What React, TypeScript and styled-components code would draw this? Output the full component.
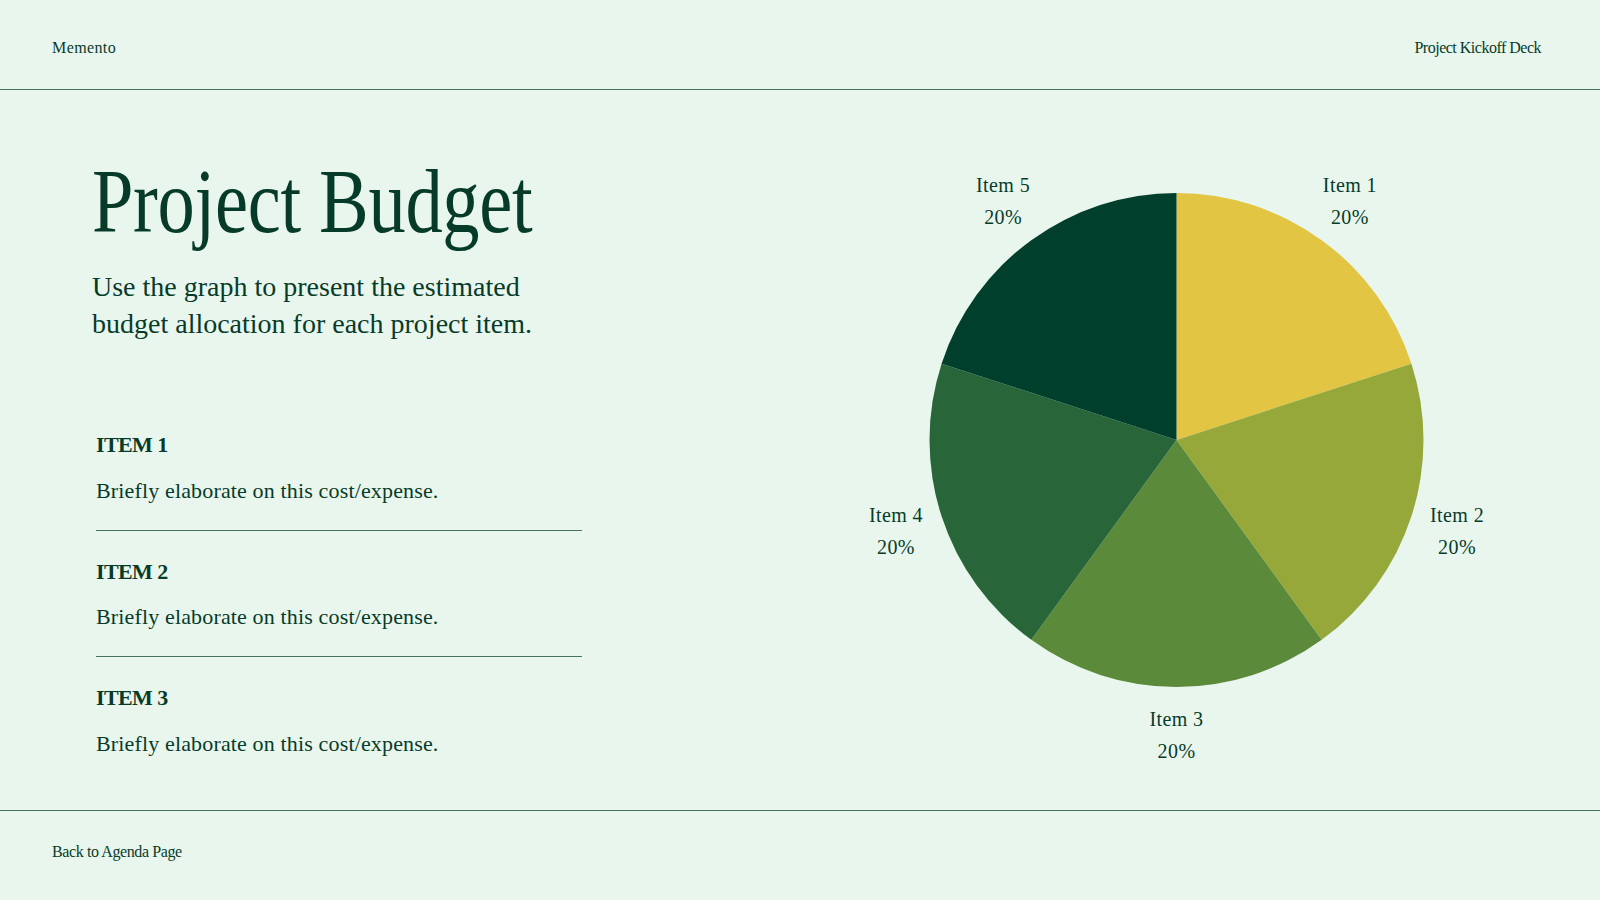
import styled, { createGlobalStyle } from 'styled-components';

const INK = '#073b29';
const RULE = '#46735f';

const GlobalStyle = createGlobalStyle`
	html, body {
		margin: 0;
		padding: 0;
		background: #e9f6ed;
	}
	body {
		font-family: "Liberation Serif", "Times New Roman", serif;
		color: ${INK};
	}
`;

type Slice = {
	label: string;
	value: number;
	color: string;
};

const slices: Slice[] = [
	{ label: 'Item 1', value: 20, color: '#e2c542' },
	{ label: 'Item 2', value: 20, color: '#97a83a' },
	{ label: 'Item 3', value: 20, color: '#5a8a3a' },
	{ label: 'Item 4', value: 20, color: '#286639' },
	{ label: 'Item 5', value: 20, color: '#013f2d' },
];

const items = ['ITEM 1', 'ITEM 2', 'ITEM 3'];

const Slide = styled.div`
	width: 1600px;
	height: 900px;
	display: flex;
	flex-direction: column;
	overflow: hidden;
`;

const Bar = styled.div<{ $top?: boolean }>`
	box-sizing: border-box;
	flex: none;
	display: flex;
	align-items: center;
	justify-content: space-between;
	padding: ${(p) => (p.$top ? '7px 59px 0 52px' : '0 59px 8px 52px')};
	height: 90px;
	${(p) => (p.$top ? `border-bottom: 1px solid ${RULE};` : `border-top: 1px solid ${RULE};`)}
	font-size: 16px;
`;

const BarText = styled.span<{ $spacing: number }>`
	letter-spacing: ${(p) => p.$spacing}px;
`;

const Main = styled.main`
	flex: 1;
	min-height: 0;
	display: flex;
`;

const TextColumn = styled.section`
	flex: 1;
	padding: 65px 0 0 92px;
`;

const Title = styled.h1`
	margin: 0;
	font-size: 92px;
	line-height: 92px;
	font-weight: 400;
	letter-spacing: -0.4px;
	transform: scaleX(0.81);
	transform-origin: left center;
	white-space: nowrap;
`;

const Lead = styled.p`
	margin: 22px 0 0;
	font-size: 28px;
	line-height: 36.5px;
`;

const ItemList = styled.ul`
	list-style: none;
	margin: 62px 0 0 4px;
	padding: 0;
	width: 486px;
`;

const Item = styled.li`
	padding: 28px 0 26px;
	border-bottom: 1px solid ${RULE};

	&:last-child {
		border-bottom: none;
	}
`;

const ItemName = styled.div`
	font-size: 22px;
	line-height: 26px;
	font-weight: 700;
	letter-spacing: -0.6px;
`;

const ItemText = styled.div`
	margin-top: 19.5px;
	font-size: 22px;
	line-height: 26px;
	letter-spacing: 0.15px;
`;

const ChartArea = styled.div`
	width: 720px;
	margin-right: 60px;
`;

const ChartSvg = styled.svg`
	display: block;
`;

const ChartLabel = styled.text`
	font-family: "Liberation Serif", "Times New Roman", serif;
	font-size: 20px;
	letter-spacing: 0.4px;
	fill: ${INK};
`;

function PieChart({ data }: { data: Slice[] }) {
	const cx = 356.5;
	const cy = 350;
	const r = 247;
	const labelR = 295;
	const total = data.reduce((sum, d) => sum + d.value, 0);

	let angle = 0;
	const point = (deg: number, radius: number) => {
		const rad = (deg * Math.PI) / 180;
		return [cx + radius * Math.sin(rad), cy - radius * Math.cos(rad)];
	};

	return (
		<ChartSvg width="720" height="720" viewBox="0 0 720 720">
			{data.map((d) => {
				const sweep = (d.value / total) * 360;
				const start = angle;
				const end = angle + sweep;
				angle = end;
				const [x1, y1] = point(start, r);
				const [x2, y2] = point(end, r);
				const [lx, ly] = point(start + sweep / 2, labelR);
				const large = sweep > 180 ? 1 : 0;
				return (
					<g key={d.label}>
						<path
							d={`M ${cx} ${cy} L ${x1} ${y1} A ${r} ${r} 0 ${large} 1 ${x2} ${y2} Z`}
							fill={d.color}
						/>
						<ChartLabel x={lx} y={ly - 9} textAnchor="middle">
							{d.label}
						</ChartLabel>
						<ChartLabel x={lx} y={ly + 22.5} textAnchor="middle">
							{d.value}%
						</ChartLabel>
					</g>
				);
			})}
		</ChartSvg>
	);
}

export default function App() {
	return (
		<>
			<GlobalStyle />
			<Slide>
				<Bar $top>
					<BarText $spacing={0.4}>Memento</BarText>
					<BarText $spacing={-0.5}>Project Kickoff Deck</BarText>
				</Bar>
				<Main>
					<TextColumn>
						<Title>Project Budget</Title>
						<Lead>
							Use the graph to present the estimated
							<br />
							budget allocation for each project item.
						</Lead>
						<ItemList>
							{items.map((name) => (
								<Item key={name}>
									<ItemName>{name}</ItemName>
									<ItemText>Briefly elaborate on this cost/expense.</ItemText>
								</Item>
							))}
						</ItemList>
					</TextColumn>
					<ChartArea>
						<PieChart data={slices} />
					</ChartArea>
				</Main>
				<Bar>
					<BarText $spacing={-0.4}>Back to Agenda Page</BarText>
				</Bar>
			</Slide>
		</>
	);
}
